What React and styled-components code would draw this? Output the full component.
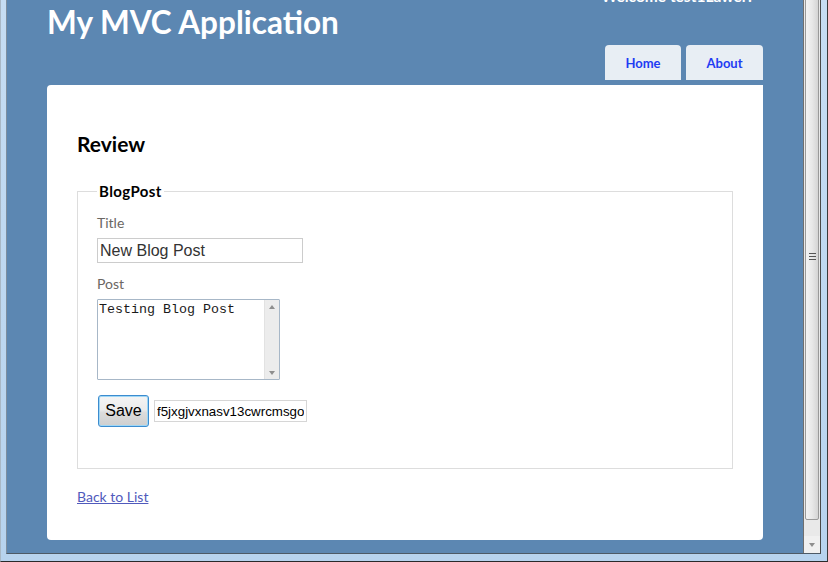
import React from 'react';
import styled, { createGlobalStyle } from 'styled-components';

const Global = createGlobalStyle`
  html, body { margin: 0; padding: 0; width: 828px; height: 562px; overflow: hidden; background: #c3dbf2; }
  * { box-sizing: border-box; }
`;

const Window = styled.div`
  width: 828px;
  height: 562px;
  display: flex;
  flex-direction: column;
  background: linear-gradient(to bottom, #c6ddf3, #b7d3ee);
  border-left: 1px solid #a9b8c6;
  border-right: 1px solid #3a3a3a;
  border-bottom: 1px solid #2a2a2a;
  padding: 0 6px 7px 5px;
`;

const Viewport = styled.div`
  height: 554px;
  display: flex;
  border-left: 1px solid #7d8e9f;
  border-right: 1px solid #4a4a4a;
  border-bottom: 1px solid #4d5a66;
`;

const Page = styled.div`
  flex: 1;
  background: #5c87b2;
  padding: 0 40px;
  overflow: hidden;
  font-family: Lato, "DejaVu Sans", sans-serif;
`;

const Header = styled.header`
  height: 85px;
  display: flex;
  justify-content: space-between;
`;

const Title = styled.h1`
  margin: 2px 0 0 0;
  font-size: 31.5px;
  line-height: 40px;
  font-weight: 700;
  color: #ffffff;
`;

const HeaderRight = styled.div`
  display: flex;
  flex-direction: column;
  justify-content: space-between;
  align-items: flex-end;
  padding-bottom: 5px;
`;

const Login = styled.div`
  margin-top: -12px;
  padding-right: 11px;
  font-size: 15.5px;
  line-height: 16px;
  font-weight: 700;
  color: #ffffff;
  white-space: nowrap;
`;

const Menu = styled.nav`
  display: flex;
  gap: 5px;
`;

const Tab = styled.a`
  width: ${p => p.$w}px;
  height: 35px;
  display: flex;
  align-items: center;
  justify-content: center;
  padding-top: 1px;
  background: #e8eef4;
  border-radius: 4px 4px 0 0;
  color: #1f3cf3;
  font-size: 13px;
  font-weight: 700;
  text-decoration: none;
`;

const Main = styled.main`
  height: 455px;
  background: #ffffff;
  border-radius: 4px 0 4px 4px;
  padding: 47px 30px 0 30px;
  display: flex;
  flex-direction: column;
  align-items: flex-start;
`;

const Heading = styled.h2`
  margin: 0;
  font-size: 21px;
  line-height: 24px;
  font-weight: 700;
  color: #000000;
`;

const Fieldset = styled.fieldset`
  align-self: stretch;
  margin: 27px 0 0 0;
  padding: 0 19px 41px 19px;
  border: 1px solid #dddddd;
  min-width: 0;
`;

const Legend = styled.legend`
  padding: 0 2px;
  font-size: 15px;
  line-height: 17px;
  letter-spacing: 0.4px;
  font-weight: 700;
  color: #000000;
`;

const Label = styled.div`
  margin-top: ${p => p.$mt}px;
  font-size: 14px;
  line-height: 17px;
  color: #6b6763;
`;

const Field = styled.div`
  margin-top: 7px;
`;

const TextInput = styled.input`
  display: block;
  width: ${p => p.$w}px;
  height: ${p => p.$h}px;
  margin: 0;
  padding: 0 2px;
  border: 1px solid ${p => p.$border || '#cccccc'};
  font-family: "Liberation Sans", Arial, sans-serif;
  font-size: ${p => p.$fs}px;
  color: ${p => p.$color || '#333333'};
  background: #ffffff;
  outline: none;
`;

const AreaBox = styled.div`
  width: 183px;
  height: 81px;
  display: flex;
  border: 1px solid #a7b7c7;
  border-radius: 1px;
  background: #ffffff;
`;

const Area = styled.textarea`
  flex: 1;
  margin: 0;
  padding: 2px 1px;
  border: none;
  resize: none;
  overflow: hidden;
  outline: none;
  font-family: "Liberation Mono", "Courier New", monospace;
  font-size: 13.33px;
  line-height: 15px;
  color: #1a1a1a;
`;

const AreaScroll = styled.div`
  width: 15px;
  display: flex;
  flex-direction: column;
  justify-content: space-between;
  align-items: center;
  background: #ececec;
  border-left: 1px solid #e2e2e2;
  padding: 5px 0 4px 0;
`;

const Arrow = styled.div`
  width: 0;
  height: 0;
  border-left: 3px solid transparent;
  border-right: 3px solid transparent;
  ${p => p.$up ? 'border-bottom: 4px solid #8e8e8e;' : 'border-top: 4px solid #8e8e8e;'}
`;

const ButtonRow = styled.div`
  margin-top: 15px;
  display: flex;
  align-items: center;
  gap: 5px;
  padding-left: 1px;
`;

const SaveButton = styled.button`
  width: 51px;
  height: 32px;
  margin: 0;
  padding: 0;
  border: 1px solid #3c8ccf;
  border-radius: 3px;
  box-shadow: inset 0 0 0 1px #9fd7f6;
  background: linear-gradient(to bottom, #f4f4f4 0%, #ececec 45%, #dcdcdc 55%, #cfcfcf 100%);
  font-family: "Liberation Sans", Arial, sans-serif;
  font-size: 16px;
  color: #000000;
`;

const BackLink = styled.a`
  margin-top: 19px;
  font-size: 14px;
  line-height: 17px;
  color: #505abc;
  text-decoration: underline;
`;

const Scrollbar = styled.div`
  width: 17px;
  display: flex;
  flex-direction: column;
  background: #e9e9e9;
  border-left: 1px solid #6f6f6f;
`;

const Thumb = styled.div`
  height: 528px;
  margin: -8px 1px 0 1px;
  border: 1px solid #999999;
  border-radius: 2px;
  background: linear-gradient(to right, #f3f3f3 0%, #e8e8e8 50%, #d4d4d4 100%);
  display: flex;
  align-items: center;
  justify-content: center;
`;

const Grip = styled.div`
  width: 7px;
  height: 7px;
  background: repeating-linear-gradient(to bottom, #555 0 1px, transparent 1px 3px);
`;

const Track = styled.div`
  flex: 1;
`;

const ArrowButton = styled.div`
  height: 17px;
  display: flex;
  align-items: center;
  justify-content: center;
  background: #f0f0f0;
`;

export default function App() {
  return (
    <>
      <Global />
      <Window>
        <Viewport>
          <Page>
            <Header>
              <Title>My MVC Application</Title>
              <HeaderRight>
                <Login>Welcome test1Lawer!</Login>
                <Menu>
                  <Tab $w={76} href="#">Home</Tab>
                  <Tab $w={77} href="#">About</Tab>
                </Menu>
              </HeaderRight>
            </Header>
            <Main>
              <Heading>Review</Heading>
              <Fieldset>
                <Legend>BlogPost</Legend>
                <Label $mt={14}>Title</Label>
                <Field>
                  <TextInput $w={206} $h={25} $fs={16} defaultValue="New Blog Post" />
                </Field>
                <Label $mt={12}>Post</Label>
                <Field>
                  <AreaBox>
                    <Area defaultValue="Testing Blog Post" />
                    <AreaScroll>
                      <Arrow $up />
                      <Arrow />
                    </AreaScroll>
                  </AreaBox>
                </Field>
                <ButtonRow>
                  <SaveButton type="button">Save</SaveButton>
                  <TextInput $w={153} $h={22} $fs={13.33} $border="#d6d6d6" $color="#000" defaultValue="f5jxgjvxnasv13cwrcmsgo" />
                </ButtonRow>
              </Fieldset>
              <BackLink href="#">Back to List</BackLink>
            </Main>
          </Page>
          <Scrollbar>
            <Thumb><Grip /></Thumb>
            <Track />
            <ArrowButton><Arrow /></ArrowButton>
          </Scrollbar>
        </Viewport>
      </Window>
    </>
  );
}
